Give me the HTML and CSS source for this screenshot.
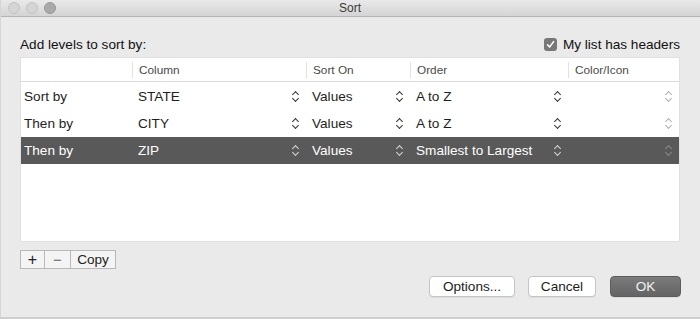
FILE: index.html
```html
<!DOCTYPE html>
<html>
<head>
<meta charset="utf-8">
<link rel="stylesheet" href="styles.css">
</head>
<body>
<div class="window">
  <div class="titlebar">
    <div class="lights">
      <span class="light"></span><span class="light"></span><span class="light dark"></span>
    </div>
    <div class="title">Sort</div>
  </div>
  <div class="content">
    <div class="toprow">
      <div class="label">Add levels to sort by:</div>
      <label class="check">
        <span class="box"><svg width="9" height="9" viewBox="0 0 9 9"><path d="M1.5 4.8 L3.6 7 L7.6 1.6" fill="none" stroke="#fff" stroke-width="1.5" stroke-linecap="round" stroke-linejoin="round"/></svg></span>
        <span>My list has headers</span>
      </label>
    </div>
    <div class="table">
      <div class="row head">
        <div class="cell"></div>
        <div class="cell sep">Column</div>
        <div class="cell sep">Sort On</div>
        <div class="cell sep">Order</div>
        <div class="cell sep">Color/Icon</div>
      </div>
      <div class="row">
        <div class="cell">Sort by</div>
        <div class="cell pop"><span>STATE</span><i class="chev"></i></div>
        <div class="cell pop"><span>Values</span><i class="chev"></i></div>
        <div class="cell pop"><span>A to Z</span><i class="chev"></i></div>
        <div class="cell pop"><span></span><i class="chev faint"></i></div>
      </div>
      <div class="row">
        <div class="cell">Then by</div>
        <div class="cell pop"><span>CITY</span><i class="chev"></i></div>
        <div class="cell pop"><span>Values</span><i class="chev"></i></div>
        <div class="cell pop"><span>A to Z</span><i class="chev"></i></div>
        <div class="cell pop"><span></span><i class="chev faint"></i></div>
      </div>
      <div class="row sel">
        <div class="cell">Then by</div>
        <div class="cell pop"><span>ZIP</span><i class="chev"></i></div>
        <div class="cell pop"><span>Values</span><i class="chev"></i></div>
        <div class="cell pop"><span>Smallest to Largest</span><i class="chev"></i></div>
        <div class="cell pop"><span></span><i class="chev faint"></i></div>
      </div>
    </div>
    <div class="seg">
      <button class="sbtn plus">+</button>
      <button class="sbtn minus">−</button>
      <button class="sbtn copy">Copy</button>
    </div>
    <div class="actions">
      <button class="btn options">Options...</button>
      <button class="btn cancel">Cancel</button>
      <button class="btn ok">OK</button>
    </div>
  </div>
</div>
</body>
</html>
```
FILE: styles.css
```css
* { box-sizing: border-box; }
html, body { margin: 0; padding: 0; }
body {
  width: 700px; height: 319px; overflow: hidden;
  font-family: "Liberation Sans", Arial, sans-serif;
  background: #e8e8e8;
  color: #1e1e1e;
}
.window {
  width: 700px; height: 319px;
  background: #eaeaea;
  border-left: 1px solid #d6d6d6;
  border-bottom: 2px solid #cfcfcf;
  display: flex; flex-direction: column;
}
.titlebar {
  height: 17px;
  background: linear-gradient(#e9e9e9, #d4d4d4);
  border-bottom: 1px solid #b4b4b4;
  display: flex; align-items: center;
  padding-left: 7px;
}
.lights { display: flex; gap: 6px; width: 60px; }
.light {
  width: 12px; height: 12px; border-radius: 50%;
  background: #d5d5d5; border: 1px solid #c2c2c2;
}
.light.dark { background: #a9a9a9; border-color: #999; }
.title {
  flex: 1; text-align: center; font-size: 12px; color: #3a3a3a;
  margin-left: -68px;
}
.content { padding: 0 20px 0 19px; flex: 1; display: flex; flex-direction: column; }
.toprow {
  display: flex; justify-content: space-between; align-items: flex-end;
  height: 40px; padding-bottom: 5px;
}
.label { font-size: 13.6px; color: #111; }
.check { display: flex; align-items: center; gap: 6px; font-size: 13.6px; color: #111; margin-right: 0; }
.box {
  width: 13px; height: 13px; border-radius: 3px; background: #787878;
  display: flex; align-items: center; justify-content: center;
}
.table {
  background: #fff;
  height: 185px;
  border: 1px solid #e0e0e0;
}
.row {
  display: grid;
  grid-template-columns: 111px 174px 104px 158px 1fr;
  height: 27px;
  align-items: center;
  font-size: 13.6px;
}
.row.head {
  height: 24px; font-size: 11.8px; color: #4a4a4a;
  border-bottom: 1px solid #dadada;
  margin-bottom: 1px;
}
.cell { padding-left: 3px; height: 100%; display: flex; align-items: center; white-space: nowrap; }
.head .cell.sep { border-left: 1px solid #e2e2e2; padding-left: 6px; height: 16px; }
.cell.pop { justify-content: space-between; padding-left: 6px; padding-right: 6px; }
.row.sel { background: #595959; color: #fff; }
.chev {
  width: 8px; height: 11px; display: block; position: relative;
}
.chev::before, .chev::after {
  content: ""; position: absolute; left: 1px; width: 4px; height: 4px;
  border-left: 1.3px solid #333; border-top: 1.3px solid #333;
}
.chev::before { top: 1px; transform: rotate(45deg); }
.chev::after { bottom: 1px; transform: rotate(225deg); }
.chev.faint::before, .chev.faint::after { border-color: #b0b0b0; }
.sel .chev::before, .sel .chev::after { border-color: #d8d8d8; }
.sel .chev.faint::before, .sel .chev.faint::after { border-color: #8a8a8a; }
.seg { display: flex; margin-top: 8px; height: 19px; }
.sbtn {
  font-family: inherit; background: #f4f4f4; border: 1px solid #b9b9b9;
  height: 19px; margin: 0; padding: 0; color: #222; font-size: 13.6px;
  margin-left: -1px;
}
.sbtn:first-child { margin-left: 0; }
.plus { width: 25px; font-size: 16px; line-height: 15px; }
.minus { width: 27px; font-size: 15px; color: #666; }
.copy { width: 46px; }
.actions {
  display: flex; justify-content: flex-end; gap: 13px;
  margin-top: 7px; margin-right: -1px;
}
.btn {
  font-family: inherit; font-size: 13.6px; height: 21px;
  border-radius: 4px; border: 1px solid #c4c4c4;
  background: #fff; color: #1c1c1c; padding: 0;
  box-shadow: 0 1px 0 rgba(0,0,0,0.06);
}
.options { width: 86px; }
.cancel { width: 68px; margin-right: 1px; }
.ok {
  width: 71px; background: linear-gradient(#7a7a7a, #646464);
  border-color: #5c5c5c; color: #f2f2f2;
}
```
